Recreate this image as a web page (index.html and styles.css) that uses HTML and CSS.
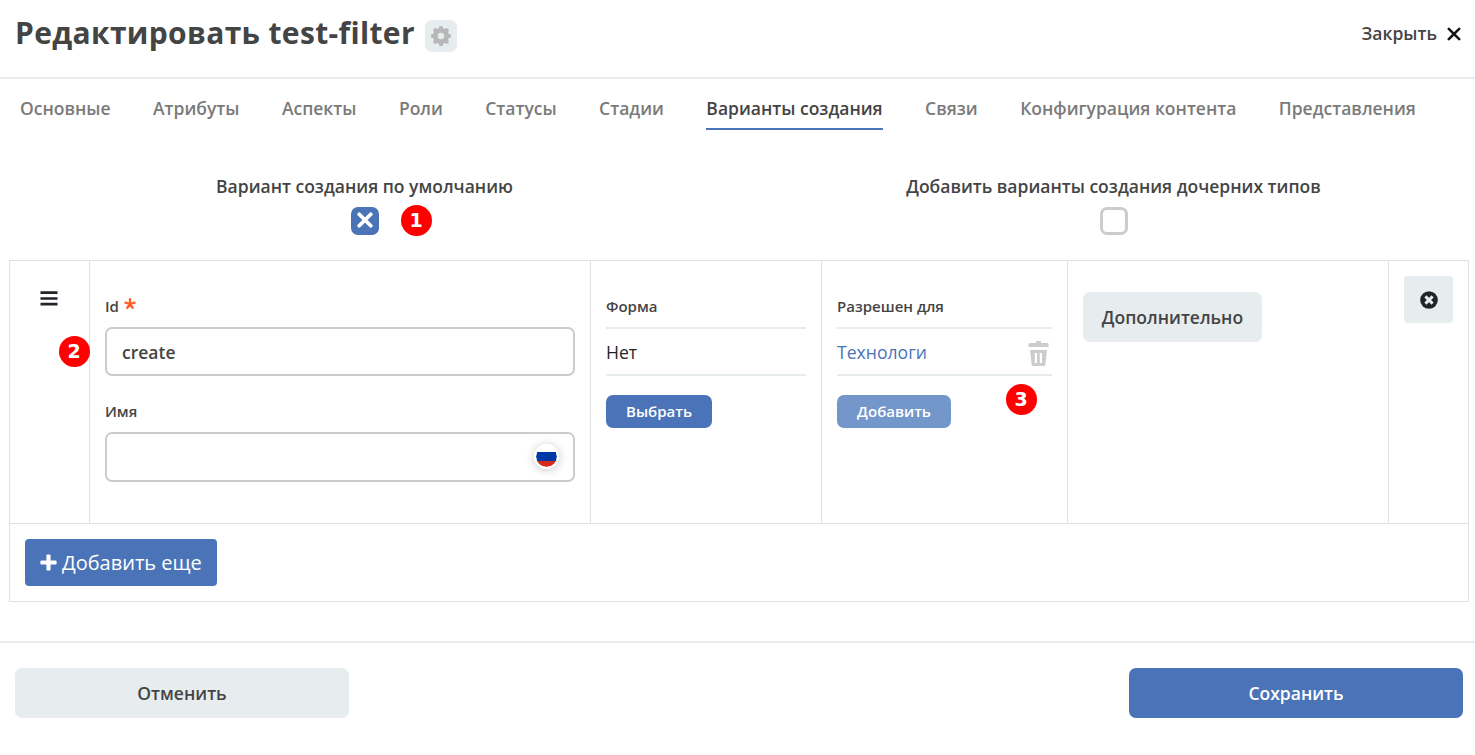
FILE: index.html
```html
<!DOCTYPE html>
<html lang="ru">
<head>
<meta charset="utf-8">
<title>Редактировать test-filter</title>
<link rel="stylesheet" href="styles.css">
</head>
<body>
<div class="modal">
  <header class="header">
    <h1 class="title">Редактировать test-filter</h1>
    <button class="settings" aria-label="Настройки">
      <svg width="20" height="20" viewBox="0 0 20 20"><g fill="#b7b7b7"><circle cx="10" cy="10" r="8.100"/><rect x="8" y="0" width="4" height="20" rx="1.600"/><rect x="8" y="0" width="4" height="20" rx="1.600" transform="rotate(45 10 10)"/><rect x="8" y="0" width="4" height="20" rx="1.600" transform="rotate(90 10 10)"/><rect x="8" y="0" width="4" height="20" rx="1.600" transform="rotate(135 10 10)"/></g><circle cx="10" cy="10" r="3.300" fill="#e7ecef"/></svg>
    </button>
    <button class="close"><span class="close-label">Закрыть</span>
      <svg width="14" height="14" viewBox="0 0 14 14"><path d="M1.800 1.800 12.200 12.200M12.200 1.800 1.800 12.200" stroke="#141414" stroke-width="2.600" stroke-linecap="round"/></svg>
    </button>
  </header>

  <nav class="tabs">
    <a class="tab">Основные</a><a class="tab">Атрибуты</a><a class="tab">Аспекты</a><a class="tab">Роли</a><a class="tab">Статусы</a><a class="tab">Стадии</a><a class="tab active">Варианты создания</a><a class="tab">Связи</a><a class="tab">Конфигурация контента</a><a class="tab">Представления</a>
  </nav>

  <section class="options">
    <div class="option">
      <span class="option-label">Вариант создания по умолчанию</span>
      <span class="check checked">
        <svg width="16" height="16" viewBox="0 0 16 16"><path d="M2.200 2.200 13.800 13.800M13.800 2.200 2.200 13.800" stroke="#fff" stroke-width="3.700" stroke-linecap="round"/></svg>
        <b class="marker marker-1">1</b>
      </span>
    </div>
    <div class="option">
      <span class="option-label">Добавить варианты создания дочерних типов</span>
      <span class="check"></span>
    </div>
  </section>

  <section class="table">
    <div class="row">
      <div class="cell drag">
        <svg width="18" height="15" viewBox="0 0 18 15"><path d="M.5 1.700h17M.5 7.500h17M.5 13.200h17" stroke="#212529" stroke-width="2.700"/></svg>
        <b class="marker marker-2">2</b>
      </div>
      <div class="cell">
        <label class="label">Id <svg class="star" width="12" height="12" viewBox="0 0 12 12"><path d="M6 6V.3M6 6 .6 4.400M6 6l5.400-1.600M6 6l-3.300 4.600M6 6l3.300 4.600" stroke="#ff5b24" stroke-width="2.300"/></svg></label>
        <div class="input id-input">create</div>
        <label class="label name-label">Имя</label>
        <div class="input name-input"><span class="flag"></span></div>
      </div>
      <div class="cell">
        <label class="label">Форма</label>
        <div class="value">Нет</div>
        <button class="btn small">Выбрать</button>
      </div>
      <div class="cell">
        <label class="label">Разрешен для</label>
        <div class="value link">Технологи
          <svg class="trash" width="21" height="25" viewBox="0 0 21 25"><path fill="#ccc" fill-rule="evenodd" d="M1.500 2H8V1Q8 0 9 0h3q1 0 1 1v1h6.500q1 0 1 1v3h-20V3q0-1 1-1ZM2 9h17l-1.700 14.500Q17.100 25 15.700 25H5.300Q3.900 25 3.700 23.500ZM6.800 12v10H9V12ZM11.800 12v10H14V12Z"/></svg>
        </div>
        <button class="btn small light">Добавить</button>
        <b class="marker marker-3">3</b>
      </div>
      <div class="cell"><button class="btn extra">Дополнительно</button></div>
      <div class="cell remove-cell">
        <button class="remove" aria-label="Удалить"><svg width="18" height="18" viewBox="0 0 18 18"><circle cx="9" cy="9" r="8.800" fill="#212529"/><path d="m5.400 5.400 7.200 7.200M12.600 5.400l-7.200 7.200" stroke="#e7ecef" stroke-width="2.900"/></svg></button>
      </div>
    </div>
    <div class="add-row">
      <button class="add"><svg width="17" height="17" viewBox="0 0 17 17"><path d="M6.400 1.400Q6.400.4 7.400.4h2.200q1 0 1 1v5h5q1 0 1 1v2.200q0 1-1 1h-5v5q0 1-1 1H7.400q-1 0-1-1v-5h-5q-1 0-1-1V7.400q0-1 1-1h5Z" fill="#fff"/></svg><span class="add-label">Добавить еще</span></button>
    </div>
  </section>

  <footer class="footer">
    <button class="btn action cancel">Отменить</button>
    <button class="btn action save">Сохранить</button>
  </footer>
</div>
</body>
</html>
```
FILE: styles.css
```css
* { box-sizing: border-box; }
body { margin: 0; background: #fff; color: #444; font-family: "Open Sans", "Noto Sans", sans-serif; }
button { margin: 0; padding: 0; border: 0; background: none; color: inherit; font-family: inherit; }
svg { display: block; flex: none; }
.modal { height: 755px; overflow: hidden; }
.header { display: flex; height: 79px; padding: 0 14.5px 0 15px; border-bottom: 2px solid #e7ecef; }
.title { margin: 13px 10.5px 0 0; font-size: 30px; line-height: 40px; font-weight: 700; letter-spacing: .34px; white-space: nowrap; }
.settings { display: flex; align-items: center; justify-content: center; width: 32px; height: 32px; margin-top: 20px; border-radius: 7px; background: #e7ecef; }
.close { display: flex; align-items: center; gap: 9.5px; height: 26px; margin: 20px 0 0 auto; font-size: 17.5px; font-weight: 600; }
.close svg { margin-top: 1px; }
.tabs { display: flex; gap: 42.45px; height: 51px; padding-left: 20px; }
.tab { height: 51px; padding-top: 16px; font-size: 17.5px; line-height: 27px; font-weight: 600; color: #7a7a7a; white-space: nowrap; }
.tab.active { color: #444; border-bottom: 2px solid #4a74b7; }
.options { display: flex; height: 130px; padding: 43px 0 0 10px; }
.option { display: flex; flex-direction: column; align-items: center; flex: 0 0 749px; }
.option:first-child { flex-basis: 709px; }
.option:last-child { margin-left: 20px; }
.option-label { font-size: 17.5px; line-height: 27px; font-weight: 600; white-space: nowrap; }
.check { position: relative; display: flex; align-items: center; justify-content: center; width: 28px; height: 28px; margin-top: 7px; border: 3px solid #ccc; border-radius: 7px; }
.checked { border: 0; background: #4a74b7; padding-bottom: 2px; }
.marker { position: absolute; display: flex; align-items: center; justify-content: center; width: 31px; height: 31px; border-radius: 50%; background: #f00; color: #fff; font: 700 19px/31px "DejaVu Sans", sans-serif; }
.marker-1 { left: 50px; top: -2.5px; }
.marker-2 { left: 48.5px; top: 74.5px; }
.marker-3 { left: 183.5px; top: 122.5px; }
.table { width: 1460px; height: 342px; margin-left: 9px; border: 1px solid #dee2e6; }
.row { display: grid; grid-template-columns: 80px 501px 231px 246px 321px 79px; height: 263px; border-bottom: 1px solid #dee2e6; }
.cell { position: relative; padding: 31px 15px 0; border-right: 1px solid #dee2e6; }
.cell:last-child { border-right: 0; }
.drag { padding-left: 30.4px; padding-top: 30.4px; }
.label { display: flex; align-items: center; gap: 5px; height: 35px; padding-bottom: 7px; font-size: 15px; font-weight: 600; }
.star { margin-top: -4px; }
.input { display: flex; align-items: center; justify-content: space-between; padding: 0 15px; border: 2px solid #ccc; border-radius: 7px; font-size: 17.5px; font-weight: 600; }
.id-input { height: 49px; }
.name-label { height: 36px; margin-top: 20px; padding-bottom: 6px; }
.name-input { height: 50px; justify-content: flex-end; padding-right: 14px; }
.flag { width: 25px; height: 25px; margin-bottom: 1px; border: 2px solid #fff; border-radius: 50%; background: linear-gradient(#fff 0 6px, #0039a6 6px 14.5px, #d52b1e 14.5px) padding-box; box-shadow: 0 1px 10px rgba(0, 0, 0, .22); }
.value { display: flex; align-items: center; justify-content: space-between; height: 49px; border: solid #e7ecef; border-width: 2px 0; font-size: 17.6px; color: #212529; }
.link { color: #4a74b7; }
.trash { margin: 3px 3px 0 0; }
.btn { display: block; border-radius: 7px; font-weight: 600; font-size: 17.5px; }
.small { width: 106px; height: 33px; margin-top: 19px; padding-bottom: 1px; background: #4a74b7; color: #fff; font-size: 15px; }
.light { width: 114px; background: #7396cb; }
.extra { width: 179px; height: 50px; background: #e7ecef; }
.remove-cell { padding-top: 15px; }
.remove { display: flex; align-items: center; justify-content: center; width: 49px; height: 47px; border-radius: 4px; background: #e7ecef; }
.add-row { padding: 15px; }
.add { display: flex; align-items: center; gap: 5px; width: 192px; height: 47px; padding-left: 15px; border-radius: 4px; background: #4a74b7; color: #fff; font-size: 20px; }
.footer { display: flex; justify-content: space-between; height: 114px; margin-top: 39px; padding: 25px 12px 0 15px; border-top: 2px solid #e7ecef; }
.action { width: 334px; height: 50px; }
.cancel { background: #e7ecef; }
.save { background: #4a74b7; color: #fff; }
```
